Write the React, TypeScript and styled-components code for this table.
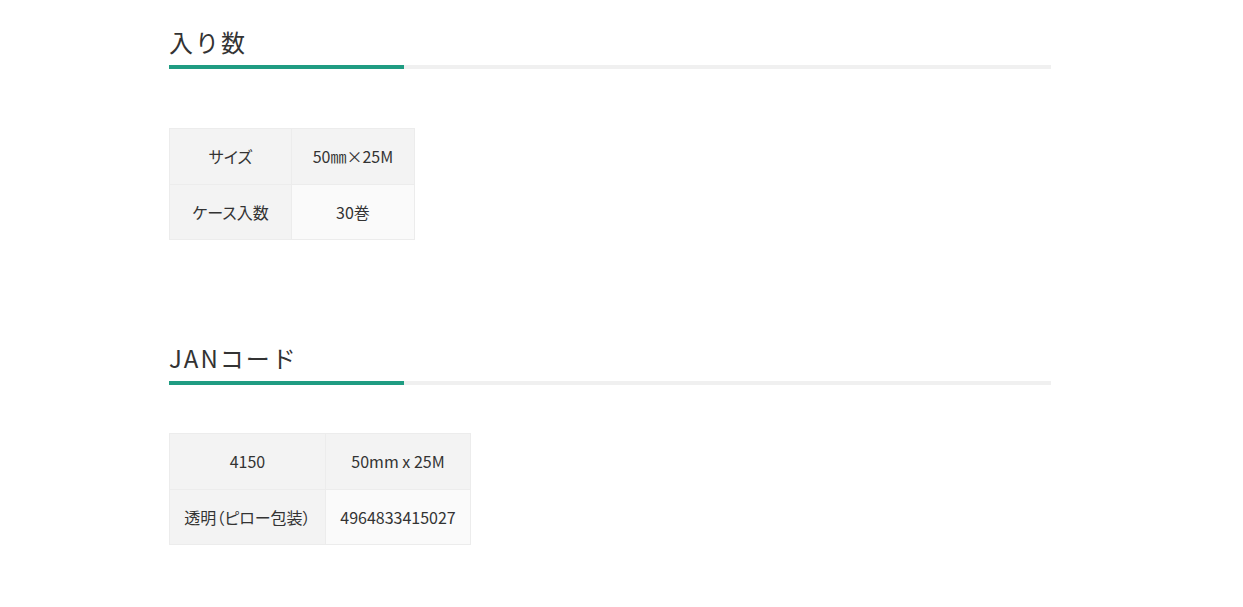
import styled, { createGlobalStyle } from "styled-components";

const GlobalStyle = createGlobalStyle`
  body {
    margin: 0;
    background: #fff;
    color: #333;
    font-family: "Noto Sans CJK JP", "Noto Sans", sans-serif;
  }
`;

const Page = styled.div`
  width: 882px;
  margin-left: 169px;
  padding-top: 24px;
`;
const Section = styled.section<{ $gap: number; $bottom: number }>`
  margin-bottom: ${(p) => p.$bottom}px;
  table {
    margin-top: ${(p) => p.$gap}px;
  }
`;
const Title = styled.h2`
  margin: 0;
  font-size: 24px;
  font-weight: 400;
  letter-spacing: 2px;
  line-height: 36px;
  padding-bottom: 5px;
  position: relative;
  border-bottom: 4px solid #f0f0f0;
  &::after {
    content: "";
    position: absolute;
    left: 0;
    bottom: -4px;
    width: 235px;
    height: 4px;
    background: #1f9c82;
  }
`;
const Table = styled.table`
  border-collapse: collapse;
  font-family: "Noto Sans CJK JP", sans-serif;
  font-size: 16px;
  font-feature-settings: "palt";
  color: #333;
  td {
    border: 1px solid #ececec;
    height: 55.5px;
    text-align: center;
    padding: 0 12px;
    background: #fafafa;
  }
  td:first-child,
  tr:first-child td {
    background: #f3f3f3;
  }
`;
const Cell = styled.td<{ $w: number }>`
  width: ${(p) => p.$w}px;
  box-sizing: border-box;
`;

export default function App() {
  return (
    <>
      <GlobalStyle />
      <Page>
        <Section $gap={59} $bottom={100}>
          <Title>入り数</Title>
          <Table>
            <tbody>
              <tr>
                <Cell $w={122}>サイズ</Cell>
                <Cell $w={123}>50㎜×25M</Cell>
              </tr>
              <tr>
                <Cell $w={122}>ケース入数</Cell>
                <Cell $w={123}>30巻</Cell>
              </tr>
            </tbody>
          </Table>
        </Section>
        <Section $gap={48} $bottom={0}>
          <Title>JANコード</Title>
          <Table>
            <tbody>
              <tr>
                <Cell $w={156}>4150</Cell>
                <Cell $w={145}>50mm x 25M</Cell>
              </tr>
              <tr>
                <Cell $w={156}>透明（ピロー包装）</Cell>
                <Cell $w={145}>4964833415027</Cell>
              </tr>
            </tbody>
          </Table>
        </Section>
      </Page>
    </>
  );
}
